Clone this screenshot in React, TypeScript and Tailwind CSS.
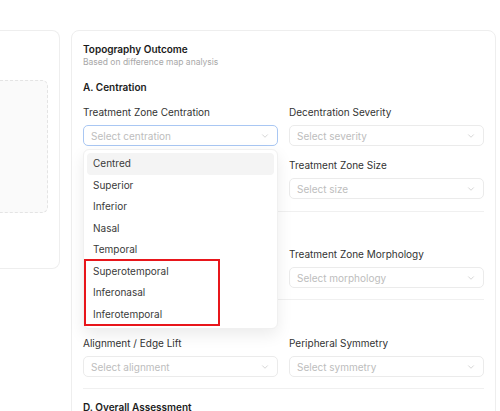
import { ChevronDown } from "lucide-react";

const CENTRATION_OPTIONS = [
  "Centred",
  "Superior",
  "Inferior",
  "Nasal",
  "Temporal",
  "Superotemporal",
  "Inferonasal",
  "Inferotemporal",
];

function Select({ placeholder, focused = false }: { placeholder: string; focused?: boolean }) {
  return (
    <div
      className={`flex h-[21px] items-center justify-between rounded-[5px] border bg-white pl-[7px] pr-[7px] ${
        focused ? "border-[#a9c7f3]" : "border-[#ebebeb]"
      }`}
    >
      <span className="text-[10px] leading-none text-[#bdbdbd]">{placeholder}</span>
      <ChevronDown size={10} strokeWidth={1.4} className="text-[#b8b8b8]" />
    </div>
  );
}

function Field({ label, children }: { label: string; children: React.ReactNode }) {
  return (
    <div className="flex flex-col gap-[6px]">
      <span className="h-[14px] text-[10px] leading-[14px] text-[#333333]">{label}</span>
      {children}
    </div>
  );
}

function Heading({ children }: { children?: React.ReactNode }) {
  return <h3 className="h-[14px] text-[10px] font-semibold leading-[14px] text-[#1c1c1c]">{children}</h3>;
}

export default function App() {
  return (
    <div className="h-[411px] w-[500px] overflow-hidden bg-white font-['Inter',sans-serif]">
      <div className="flex items-start gap-[11px] pt-[30px]">
        {/* left card, mostly scrolled off */}
        <div className="h-[239px] w-[60px] shrink-0 rounded-r-[8px] border border-l-0 border-[#eeeeee] bg-white pt-[49px]">
          <div className="h-[133px] w-[48px] rounded-r-[6px] border border-l-0 border-dashed border-[#e4e4e4] bg-[#fafafa]" />
        </div>

        {/* right card */}
        <div className="relative h-[420px] w-[425px] shrink-0 rounded-[8px] border border-[#eeeeee] bg-white px-[11px] pt-[12px]">
          <h2 className="h-[13px] text-[10px] font-semibold leading-[13px] text-[#1a1a1a]">Topography Outcome</h2>
          <p className="h-[12px] text-[8.5px] leading-[12px] text-[#a8a8a8]">Based on difference map analysis</p>

          <section className="mt-[12px] border-b border-[#f0f0f0] pb-[12px]">
            <Heading>A. Centration</Heading>
            <div className="mt-[11px] grid grid-cols-2 gap-x-[11px] gap-y-[12px]">
              <div className="relative">
                <Field label="Treatment Zone Centration">
                  <Select placeholder="Select centration" focused />
                </Field>
                {/* open menu */}
                <div className="absolute left-0 right-0 top-[44px] z-10 rounded-[6px] border border-[#f0f0f0] bg-white p-[3px] shadow-[0_6px_16px_rgba(0,0,0,0.08)]">
                  {CENTRATION_OPTIONS.map((opt, i) => (
                    <div
                      key={opt}
                      className={`flex h-[21.5px] items-center rounded-[4px] pl-[6px] text-[10px] text-[#3a3a3a] ${
                        i === 0 ? "bg-[#f4f4f4]" : ""
                      }`}
                    >
                      {opt}
                    </div>
                  ))}
                </div>
                {/* annotation box */}
                <div className="absolute left-[1px] top-[154px] z-20 h-[67px] w-[136px] border-2 border-[#e8161b]" />
              </div>
              <Field label="Decentration Severity">
                <Select placeholder="Select severity" />
              </Field>
              <div />
              <Field label="Treatment Zone Size">
                <Select placeholder="Select size" />
              </Field>
            </div>
          </section>

          {/* sections B and C: left side sits under the open menu */}
          <section className="border-b border-[#f0f0f0] pb-[11px] pt-[10px]">
            <Heading />
            <div className="mt-[11px] grid grid-cols-2 gap-x-[11px]">
              <div />
              <Field label="Treatment Zone Morphology">
                <Select placeholder="Select morphology" />
              </Field>
            </div>
          </section>

          <section className="border-b border-[#f0f0f0] pb-[11px] pt-[11px]">
            <Heading />
            <div className="mt-[11px] grid grid-cols-2 gap-x-[11px]">
              <Field label="Alignment / Edge Lift">
                <Select placeholder="Select alignment" />
              </Field>
              <Field label="Peripheral Symmetry">
                <Select placeholder="Select symmetry" />
              </Field>
            </div>
          </section>

          <section className="pt-[11px]">
            <Heading>D. Overall Assessment</Heading>
          </section>
        </div>
      </div>
    </div>
  );
}
